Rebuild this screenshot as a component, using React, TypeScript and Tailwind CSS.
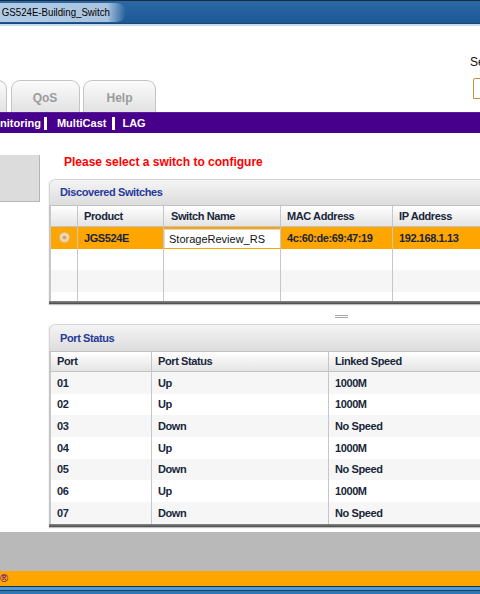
import React from "react";

const ports: [string, string, string][] = [
  ["01", "Up", "1000M"],
  ["02", "Up", "1000M"],
  ["03", "Down", "No Speed"],
  ["04", "Up", "1000M"],
  ["05", "Down", "No Speed"],
  ["06", "Up", "1000M"],
  ["07", "Down", "No Speed"],
];

function Radio() {
  return (
    <svg width="13" height="13" viewBox="0 0 13 13">
      <defs>
        <radialGradient id="rg" cx="50%" cy="45%" r="60%">
          <stop offset="0%" stopColor="#fbe8c4" />
          <stop offset="100%" stopColor="#eec27a" />
        </radialGradient>
      </defs>
      <circle cx="6.5" cy="6.5" r="5.6" fill="url(#rg)" stroke="#d9a657" strokeWidth="1" />
      <circle cx="6.5" cy="6.5" r="2" fill="#c9a77c" />
    </svg>
  );
}

export default function App() {
  return (
    <div className="w-[480px] h-[594px] overflow-hidden bg-white flex flex-col font-['Liberation_Sans',Arial,sans-serif]">
      {/* Title bar */}
      <div className="h-[26px] shrink-0 flex flex-col">
        <div className="h-px bg-[#1a2a3b]" />
        <div className="h-[22px] bg-gradient-to-b from-[#2a69a7] to-[#1d5894] flex items-center">
          <div className="h-[19px] w-[126px] flex items-center bg-gradient-to-r from-[#b2cbe5] via-[#aac4e0] via-85% to-transparent rounded-r-full">
            <span className="text-[11px] text-black whitespace-nowrap origin-left scale-x-[0.88] pl-[2px] font-['Liberation_Sans',Arial,sans-serif]">
              GS524E-Building_Switch
            </span>
          </div>
        </div>
        <div className="h-px bg-[#17487a]" />
        <div className="h-[2px] bg-[#c9dbee]" />
      </div>

      {/* White header with tabs */}
      <div className="h-[86px] shrink-0 flex">
        <div className="self-end flex items-end gap-[3.5px] ml-[-62px]">
          <div className="w-[69px] h-[32px] rounded-t-[9px] border border-b-0 border-[#c4c4c4] bg-gradient-to-b from-[#fbfbfb] to-[#e2e2e2]" />
          <div className="w-[69px] h-[32px] rounded-t-[9px] border border-b-0 border-[#c4c4c4] bg-gradient-to-b from-[#fbfbfb] to-[#e2e2e2] flex items-center justify-center pt-[3px] text-[12px] font-bold text-[#9b9b9b]">
            QoS
          </div>
          <div className="w-[73px] h-[32px] rounded-t-[9px] border border-b-0 border-[#c4c4c4] bg-gradient-to-b from-[#fbfbfb] to-[#e2e2e2] flex items-center justify-center pt-[3px] text-[12px] font-bold text-[#9b9b9b]">
            Help
          </div>
        </div>
        <div className="ml-auto w-[10px] shrink-0 flex flex-col pt-[29px] overflow-visible">
          <div className="text-[12px] leading-[14px] text-[#111] whitespace-nowrap">Se</div>
          <div className="mt-[9px] ml-[3px] w-[20px] h-[21px] border border-[#c8913e] rounded-tl-[2px] bg-white" />
        </div>
      </div>

      {/* Purple nav bar */}
      <div className="h-[21px] shrink-0 bg-[#47008b] border-t border-[#5a1c9c] flex items-center text-white font-bold text-[11px] whitespace-nowrap">
        <span>nitoring</span>
        <span className="ml-[3px] w-[3px] h-[13px] bg-white" />
        <span className="ml-[10px]">MultiCast</span>
        <span className="ml-[6px] w-[3px] h-[13px] bg-white" />
        <span className="ml-[7px]">LAG</span>
      </div>

      {/* Content */}
      <div className="h-[399px] shrink-0 flex">
        <div className="mt-[22px] w-[40px] h-[47px] shrink-0 bg-[#dcdcdc] border-r border-b border-[#b5b5b5]" />
        <div className="ml-[9px] w-[585px] shrink-0 flex flex-col text-[11px] font-bold tracking-[-0.4px] text-[#18263a]">
          <div className="mt-[22px] pl-[15px] h-[14px] leading-[14px] text-[12px] tracking-normal text-[#ff0000]">
            Please select a switch to configure
          </div>

          {/* Discovered Switches */}
          <div className="mt-[10px] flex flex-col shadow-[0_1px_1px_rgba(0,0,0,0.25)]">
            <div className="h-[26px] rounded-tl-[6px] border-l border-t border-[#d4d4d4] bg-gradient-to-b from-[#f4f4f4] to-[#dddddd] pl-[10px] flex items-center text-[#26399a]">
              Discovered Switches
            </div>
            <div className="border-l-2 border-[#c6c6c6] flex flex-col">
              <div className="h-[22px] flex border-t border-b border-[#c2c2c2] bg-gradient-to-b from-white to-[#e4e4e4]">
                <div className="w-[26px]" />
                <div className="w-[86px] border-l border-[#c6c6c6] pl-[6px] flex items-center">Product</div>
                <div className="w-[117px] border-l border-[#c6c6c6] pl-[7px] flex items-center">Switch Name</div>
                <div className="w-[112px] border-l border-[#c6c6c6] pl-[6px] flex items-center">MAC Address</div>
                <div className="flex-1 border-l border-[#c6c6c6] pl-[6px] flex items-center">IP Address</div>
              </div>
              <div className="h-[21.7px] flex bg-[#ffa500]">
                <div className="w-[26px] flex items-center justify-center pl-[1px]">
                  <Radio />
                </div>
                <div className="w-[86px] border-l border-[#c6c6c6] pl-[6px] flex items-center">JGS524E</div>
                <div className="w-[117px] border-l border-[#c6c6c6] pt-[2px] pb-[1px] flex">
                  <div className="flex-1 bg-white border-t border-l border-[#d9d9d9] pl-[4px] flex items-center font-normal tracking-normal text-[#111]">
                    StorageReview_RS
                  </div>
                </div>
                <div className="w-[112px] border-l border-[#c6c6c6] pl-[6px] flex items-center">4c:60:de:69:47:19</div>
                <div className="flex-1 border-l border-[#c6c6c6] pl-[6px] flex items-center">192.168.1.13</div>
              </div>
              {["bg-white", "bg-[#f6f6f6]"].map((bg, i) => (
                <div key={i} className={`h-[21.7px] flex ${bg}`}>
                  <div className="w-[26px]" />
                  <div className="w-[86px] border-l border-[#c6c6c6]" />
                  <div className="w-[117px] border-l border-[#c6c6c6]" />
                  <div className="w-[112px] border-l border-[#c6c6c6]" />
                  <div className="flex-1 border-l border-[#c6c6c6]" />
                </div>
              ))}
              <div className="h-[8.9px] flex bg-white">
                <div className="w-[26px]" />
                <div className="w-[86px] border-l border-[#c6c6c6]" />
                <div className="w-[117px] border-l border-[#c6c6c6]" />
                <div className="w-[112px] border-l border-[#c6c6c6]" />
                <div className="flex-1 border-l border-[#c6c6c6]" />
              </div>
            </div>
            <div className="h-[3px] bg-gradient-to-b from-[#8a8a8a] to-[#4a4a4a]" />
          </div>

          {/* Splitter */}
          <div className="h-[20px] flex flex-col items-center pt-[11px] gap-[1px]">
            <div className="w-[13px] h-px bg-[#a6a6a6]" />
            <div className="w-[13px] h-px bg-[#a6a6a6]" />
          </div>

          {/* Port Status */}
          <div className="flex flex-col shadow-[0_1px_1px_rgba(0,0,0,0.25)]">
            <div className="h-[27px] rounded-tl-[6px] border-l border-t border-[#d4d4d4] bg-gradient-to-b from-[#f4f4f4] to-[#dddddd] pl-[10px] flex items-center text-[#26399a]">
              Port Status
            </div>
            <div className="border-l-2 border-[#c6c6c6] flex flex-col">
              <div className="h-[21px] flex border-t border-b border-[#c2c2c2] bg-gradient-to-b from-white to-[#e4e4e4]">
                <div className="w-[100px] pl-[6px] flex items-center">Port</div>
                <div className="w-[177px] border-l border-[#c6c6c6] pl-[6px] flex items-center">Port Status</div>
                <div className="flex-1 border-l border-[#c6c6c6] pl-[6px] flex items-center">Linked Speed</div>
              </div>
              {ports.map(([p, s, sp], i) => (
                <div key={p} className={`h-[21.7px] flex ${i % 2 === 0 ? "bg-[#f6f6f6]" : "bg-white"}`}>
                  <div className="w-[100px] pl-[6px] flex items-center">{p}</div>
                  <div className="w-[177px] border-l border-[#c6c6c6] pl-[6px] flex items-center">{s}</div>
                  <div className="flex-1 border-l border-[#c6c6c6] pl-[6px] flex items-center">{sp}</div>
                </div>
              ))}
            </div>
            <div className="h-[3px] bg-gradient-to-b from-[#8a8a8a] to-[#4a4a4a]" />
          </div>
        </div>
      </div>

      {/* Footer */}
      <div className="h-[39px] shrink-0 bg-[#b9b9b9]" />
      <div className="h-[15px] shrink-0 bg-[#ffa500] flex items-center text-[11px] leading-none text-[#4a0090]">
        ®
      </div>
      <div className="h-[8px] shrink-0 flex flex-col">
        <div className="h-px bg-[#1f3345]" />
        <div className="h-[3px] bg-[#4a9ad9]" />
        <div className="h-px bg-[#20405e]" />
        <div className="h-[3px] bg-[#2f78b8]" />
      </div>
    </div>
  );
}
